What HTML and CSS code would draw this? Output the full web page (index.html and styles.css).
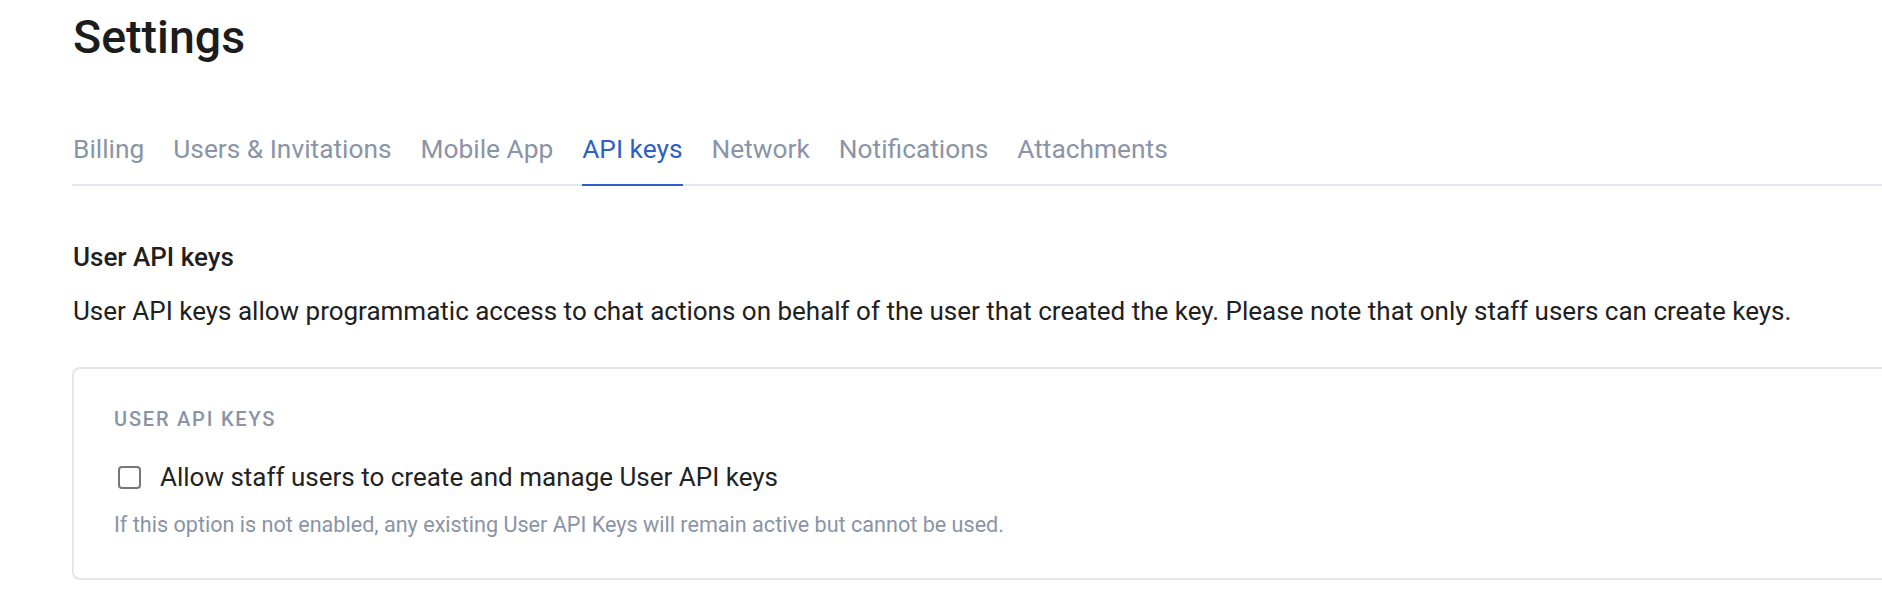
FILE: index.html
```html
<!DOCTYPE html>
<html lang="en">
<head>
  <meta charset="UTF-8"/>
  <title>Settings</title>
  <link rel="stylesheet" href="styles.css">
</head>
<body>
<div class="page">
  <h1 class="title">Settings</h1>

  <nav class="tabs">
    <a class="tab" href="#">Billing</a>
    <a class="tab" href="#">Users &amp; Invitations</a>
    <a class="tab" href="#">Mobile App</a>
    <a class="tab active" href="#">API keys</a>
    <a class="tab" href="#">Network</a>
    <a class="tab" href="#">Notifications</a>
    <a class="tab" href="#">Attachments</a>
  </nav>

  <section class="section">
    <h2 class="section-title">User API keys</h2>
    <p class="intro">User API keys allow programmatic access to chat actions on behalf of the user that created the key. Please note that only staff users can create keys.</p>

    <div class="card">
      <div class="card-label">USER API KEYS</div>
      <label class="check">
        <input type="checkbox" class="check-box"/>
        <span>Allow staff users to create and manage User API keys</span>
      </label>
      <p class="help">If this option is not enabled, any existing User API Keys will remain active but cannot be used.</p>
    </div>
  </section>
</div>
</body>
</html>
```

FILE: styles.css
```css
html, body { overflow: hidden; }

body { margin: 0; background: #fff; font-family: Roboto, "Liberation Sans", Arial, sans-serif; color: #202020; }

* { box-sizing: border-box; }

a { text-decoration: none; }

/* ========== page ========== */
.page { width: 1980px; padding: 9px 0 0 72px; }

.title { margin: 0; font-size: 46.5px; line-height: 56px; font-weight: 500; color: #1c1c1c; padding-left: 1px; }

.tabs { display: flex; gap: 29px; margin-top: 68px; padding-left: 1px; border-bottom: 2px solid #e3e7ed; }
.tab { display: block; font-size: 26.3px; line-height: 32px; padding-bottom: 19px; color: #8a94a6; border-bottom: 2px solid transparent; margin-bottom: -2px; }
.tab.active { color: #2e5fc7; border-bottom-color: #2e5fc7; }

.section { padding-top: 55px; }
.section-title { margin: 0; font-size: 26px; line-height: 32px; font-weight: 500; color: #1f1f1f; padding-left: 1px; }
.intro { margin: 22px 0 0; font-size: 26px; line-height: 32px; color: #202020; padding-left: 1px; }

.card { margin-top: 40px; border: 2px solid #e3e7ed; border-radius: 8px; padding: 38px 40px 40px; }
.card-label { font-size: 20px; line-height: 24px; font-weight: 500; letter-spacing: 1.8px; color: #8a94a6; }

.check { display: flex; align-items: center; gap: 19px; margin-top: 30px; height: 32px; font-size: 26px; color: #222; cursor: pointer; }
.check-box { appearance: none; -webkit-appearance: none; margin: 0 0 0 4px; width: 23px; height: 23px; border: 2px solid #767676; border-radius: 4px; background: #fff; }

.help { margin: 19px 0 0; font-size: 21.6px; line-height: 26px; color: #8a94a6; }
```
